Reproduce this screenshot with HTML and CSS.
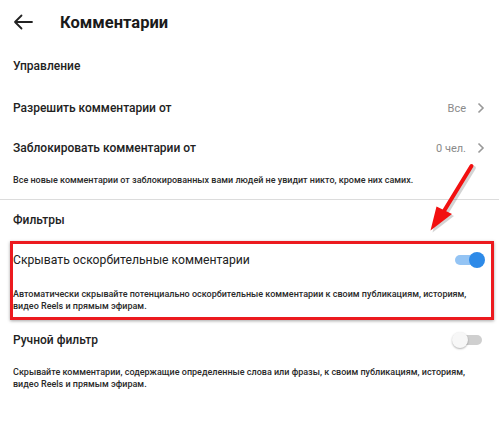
FILE: index.html
```html
<!DOCTYPE html>
<html lang="ru">
<head>
<meta charset="utf-8">
<link rel="stylesheet" href="styles.css">
</head>
<body>
<div class="page">
  <div class="header">
    <svg class="back" width="20" height="16" viewBox="0 0 20 16"><path d="M19 8H2M8.5 1.5L2 8l6.5 6.5" fill="none" stroke="#222" stroke-width="1.8" stroke-linecap="round" stroke-linejoin="round"/></svg>
    <div class="title">Комментарии</div>
  </div>
  <div class="row section">Управление</div>
  <div class="row">
    <span class="label">Разрешить комментарии от</span>
    <span class="value">Все <svg class="chev" width="8" height="12" viewBox="0 0 8 12"><path d="M1.5 1.5L6 6l-4.5 4.5" fill="none" stroke="#999" stroke-width="1.6"/></svg></span>
  </div>
  <div class="row">
    <span class="label">Заблокировать комментарии от</span>
    <span class="value">0 чел. <svg class="chev" width="8" height="12" viewBox="0 0 8 12"><path d="M1.5 1.5L6 6l-4.5 4.5" fill="none" stroke="#999" stroke-width="1.6"/></svg></span>
  </div>
  <p class="note first">Все новые комментарии от заблокированных вами людей не увидит никто, кроме них самих.</p>
  <div class="divider"></div>
  <div class="row section filters">Фильтры</div>
  <div class="highlight">
    <div class="row toggle-row">
      <span class="label">Скрывать оскорбительные комментарии</span>
      <span class="switch on"><span class="knob"></span></span>
    </div>
    <p class="note">Автоматически скрывайте потенциально оскорбительные комментарии к своим публикациям, историям, видео Reels и прямым эфирам.</p>
  </div>
  <div class="row toggle-row manual">
    <span class="label">Ручной фильтр</span>
    <span class="switch off"><span class="knob"></span></span>
  </div>
  <p class="note">Скрывайте комментарии, содержащие определенные слова или фразы, к своим публикациям, историям, видео Reels и прямым эфирам.</p>
  <svg class="arrow" width="70" height="80" viewBox="420 160 70 80">
    <g transform="translate(2,2)" opacity="0.25">
      <path d="M471.5 166L444 211" stroke="#555" stroke-width="4.5" stroke-linecap="round"/>
      <path d="M430.5 230.5L436.5 206.5L452 214Z" fill="#555"/>
    </g>
    <path d="M471.5 166L444 211" stroke="#f21010" stroke-width="4" stroke-linecap="round"/>
    <path d="M430.5 230.5L436.5 206.5L452 214Z" fill="#f21010"/>
  </svg>
</div>
</body>
</html>
```
FILE: styles.css
```css
html, body {
  margin: 0;
  padding: 0;
  background: #fff;
}
.page {
  position: relative;
  width: 499px;
  height: 428px;
  overflow: hidden;
  font-family: Roboto, "Noto Sans", sans-serif;
  color: #222;
}
.header {
  height: 44px;
  display: flex;
  align-items: center;
  padding-left: 13px;
}
.back {
  display: block;
}
.title {
  margin-left: 27px;
  font-size: 16.5px;
  font-weight: 700;
  color: #1a1a1a;
}
.row {
  height: 40px;
  display: flex;
  align-items: center;
  justify-content: space-between;
  padding: 0 13px;
  font-size: 12px;
  font-weight: 500;
}
.section {
  height: 44px;
}
.value {
  display: flex;
  align-items: center;
  gap: 11px;
  font-size: 11px;
  font-weight: 400;
  color: #8a8a8a;
  margin-right: 1px;
}
.chev {
  display: block;
}
.note {
  margin: 0;
  padding: 0 13px;
  font-size: 9px;
  line-height: 12px;
  font-weight: 500;
  color: #2a2a2a;
}
.note.first {
  padding-top: 6px;
  padding-bottom: 13px;
}
.divider {
  height: 1px;
  background: #dcdcdc;
}
.filters {
  height: 39px;
}
.highlight {
  margin: 2px 5px 0 10px;
  border: 3px solid #ec1a1f;
  box-shadow: 0 1px 3px rgba(0,0,0,0.35);
  height: 73px;
}
.highlight .row {
  padding: 0;
  height: 32px;
  margin-left: 0;
  margin-right: 6px;
  font-weight: 400;
  font-size: 12.2px;
}
.highlight .note {
  padding: 12px 0 0 0;
  font-weight: 500;
}
.switch {
  position: relative;
  width: 32px;
  height: 16px;
  display: block;
}
.switch::before {
  content: "";
  position: absolute;
  left: 2px;
  right: 2px;
  top: 3px;
  height: 10px;
  border-radius: 5px;
}
.switch .knob {
  position: absolute;
  top: 0;
  width: 16px;
  height: 16px;
  border-radius: 50%;
}
.switch.on::before {
  background: #94c4f4;
}
.switch.on .knob {
  right: 0;
  background: #2d8ae8;
}
.switch.off::before {
  background: #cfcfcf;
}
.switch.off .knob {
  left: 0;
  background: #f7f7f7;
  box-shadow: 0 1px 2px rgba(0,0,0,0.3);
}
.manual {
  height: 40px;
  margin-top: 0;
  padding-right: 15px;
  font-weight: 500;
}
.manual + .note {
  padding-top: 6px;
}
.arrow {
  position: absolute;
  left: 420px;
  top: 160px;
}
```
